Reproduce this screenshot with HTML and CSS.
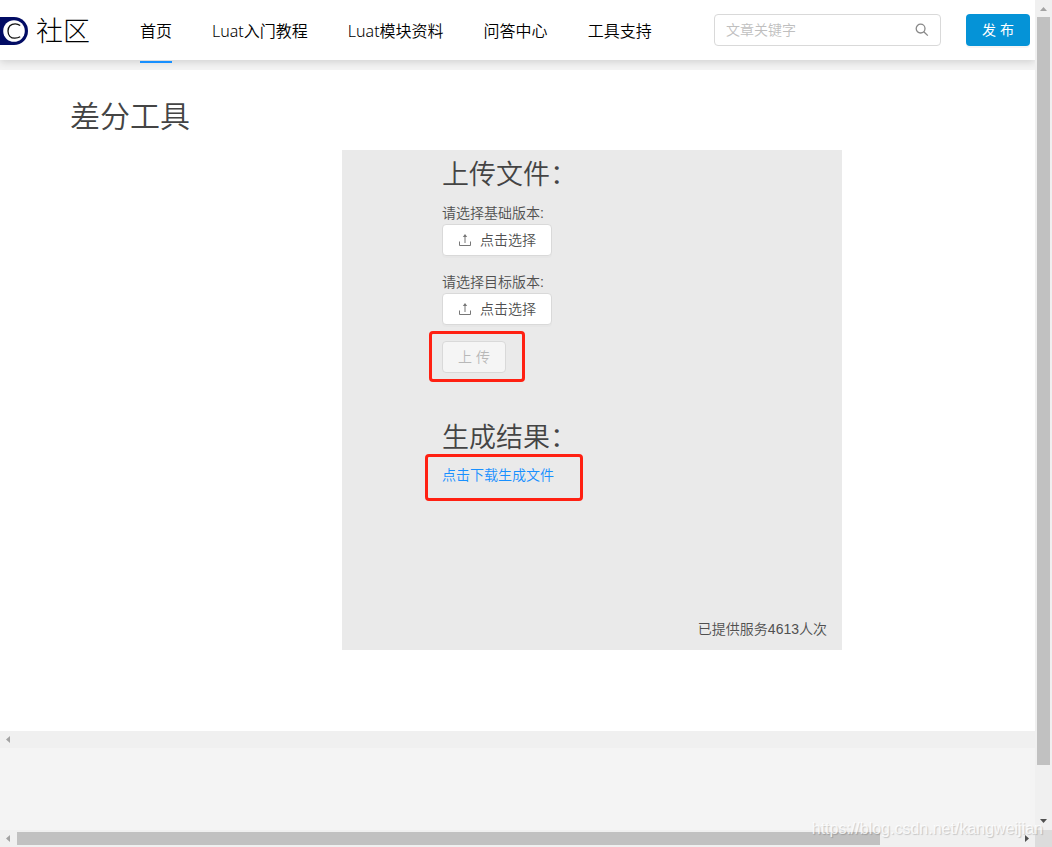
FILE: index.html
```html
<!DOCTYPE html>
<html lang="zh-CN">
<head>
<meta charset="utf-8">
<meta name="viewport" content="width=device-width, initial-scale=1">
<title>差分工具</title>
<link rel="stylesheet" href="styles.css">
</head>
<body>
<div class="frame">
  <div class="viewport">
    <header class="header">
      <a class="logo" href="#">
        <svg class="logo-mark" viewBox="0 0 28 28" aria-hidden="true">
          <path d="M0 0H14A14 14 0 0 1 14 28H0Z" fill="#020c64"/>
          <circle cx="14" cy="14" r="10.8" fill="#fff"/>
          <path d="M20.2 8.6C18.8 7.5 17.1 6.8 15.2 6.8C10.8 6.8 8 9.8 8 14C8 18.3 10.6 21.2 14.8 21.2C17 21.2 18.7 20.7 20.2 19.8" fill="none" stroke="#111" stroke-width="1.3"/>
        </svg>
        <span class="logo-text">社区</span>
      </a>
      <nav class="nav">
        <a class="nav-link active" href="#">首页</a>
        <a class="nav-link" href="#">Luat入门教程</a>
        <a class="nav-link" href="#">Luat模块资料</a>
        <a class="nav-link" href="#">问答中心</a>
        <a class="nav-link" href="#">工具支持</a>
      </nav>
      <div class="search">
        <input class="search-input" type="text" placeholder="文章关键字" aria-label="文章关键字">
        <svg class="search-icon" viewBox="0 0 14 14" aria-hidden="true"><circle cx="5.6" cy="5.6" r="4.4"/><path d="M8.8 8.8L12.8 12.6"/></svg>
      </div>
      <button class="publish" type="button">发 布</button>
    </header>
    <main class="content">
      <h1 class="title">差分工具</h1>
      <div class="stage">
        <section class="card">
          <div class="form">
            <h2 class="subtitle">上传文件：</h2>
            <div class="field">
              <label class="label" for="base">请选择基础版本:</label>
              <button class="btn" id="base" type="button"><svg class="upload-icon" viewBox="0 0 12 12" aria-hidden="true"><path d="M.5 7.5V11.5H11.5V7.5M6 9V1.5"/><path class="tip" d="M6 0L8.2 3H3.8Z"/></svg>点击选择</button>
            </div>
            <div class="field">
              <label class="label" for="target">请选择目标版本:</label>
              <button class="btn" id="target" type="button"><svg class="upload-icon" viewBox="0 0 12 12" aria-hidden="true"><path d="M.5 7.5V11.5H11.5V7.5M6 9V1.5"/><path class="tip" d="M6 0L8.2 3H3.8Z"/></svg>点击选择</button>
            </div>
            <div class="submit"><button class="btn" type="button" disabled>上 传</button></div>
            <h2 class="subtitle">生成结果：</h2>
            <div class="result"><a class="download" href="#">点击下载生成文件</a></div>
          </div>
          <p class="count">已提供服务4613人次</p>
        </section>
      </div>
    </main>
    <div class="inner-bar"><svg class="arrow" viewBox="0 0 17 17"><path d="M6 8.5L10 5V12Z"/></svg></div>
  </div>
  <div class="vbar">
    <svg class="arrow" viewBox="0 0 17 17"><path d="M5 11H12L8.5 7Z"/></svg>
    <div class="vtrack"><div class="vthumb"></div></div>
    <svg class="arrow dark" viewBox="0 0 17 17"><path d="M5 6H12L8.5 10Z"/></svg>
  </div>
  <div class="hbar">
    <svg class="arrow" viewBox="0 0 17 17"><path d="M6 8.5L10 5V12Z"/></svg>
    <div class="htrack"><div class="hthumb"></div></div>
    <svg class="arrow dark" viewBox="0 0 17 17"><path d="M11 8.5L7 5V12Z"/></svg>
  </div>
  <div class="corner"></div>
  <div class="watermark">https://blog.csdn.net/kangweijian</div>
</div>
</body>
</html>
```
FILE: styles.css
```css
* { box-sizing: border-box; }
body {
  margin: 0;
  background: #f4f4f4;
  color: #505050;
  font-family: "Liberation Sans", "Noto Sans CJK SC", sans-serif;
  font-size: 14px;
  font-weight: 350;
  line-height: 22px;
}
a { color: inherit; text-decoration: none; }
button, input { font: inherit; color: inherit; }

.frame {
  position: relative;
  display: grid;
  grid-template-columns: minmax(0, 1fr) 17px;
  grid-template-rows: minmax(0, 1fr) 17px;
  height: 100vh;
}
.viewport { overflow: hidden; }

.header {
  position: relative;
  display: flex;
  align-items: center;
  height: 60px;
  padding-right: 5px;
  background: #fff;
  box-shadow: 0 2px 8px rgba(0, 0, 0, 0.15);
}
.logo { display: flex; align-items: center; gap: 8px; padding-top: 2px; color: #000; }
.logo-mark { width: 28px; height: 28px; }
.logo-text { padding-top: 2px; font-size: 27px; font-weight: 300; line-height: 40px; }
.nav {
  display: flex;
  gap: 40px;
  margin-left: 50px;
  padding-top: 2px;
  color: #000;
  font-family: "Noto Sans", "Noto Sans CJK SC", sans-serif;
  font-size: 16px;
  line-height: 62px;
  white-space: nowrap;
}
.nav-link { position: relative; }
.active::after {
  content: "";
  position: absolute;
  bottom: -1px;
  left: 0;
  right: 0;
  height: 2px;
  background: #1890ff;
}
.search {
  display: flex;
  align-items: center;
  width: 227px;
  height: 32px;
  margin-left: auto;
  padding: 0 11px;
  border: 1px solid #d9d9d9;
  border-radius: 4px;
  background: #fff;
}
.search-input { flex: 1; min-width: 0; padding: 0; border: 0; outline: 0; background: none; }
.search-input::placeholder { color: #bfbfbf; opacity: 1; }
.search-icon { width: 14px; height: 14px; fill: none; stroke: #888; stroke-width: 1.3; }
.publish {
  width: 64px;
  height: 32px;
  margin-left: 25px;
  padding: 0;
  border: 0;
  border-radius: 4px;
  background: #0593d7;
  box-shadow: 0 2px 0 rgba(0, 0, 0, 0.04);
  color: #fff;
  font-weight: 400;
}

.content { margin-top: 10px; padding: 27px 0 81px; background: #fff; }
.title { margin: 0 0 13px 70px; color: #444; font-size: 30px; font-weight: 350; line-height: 40px; }
.stage { display: flex; justify-content: center; padding-left: 149px; }
.card {
  display: flex;
  flex-direction: column;
  justify-content: space-between;
  width: 500px;
  min-height: 500px;
  padding: 6px 15px 10px 100px;
  background: #eaeaea;
}
.subtitle { margin: 0; color: #444; font-size: 27px; font-weight: 350; line-height: 38px; }
.field { margin-top: 8px; }
.field + .field { margin-top: 15px; }
.label { display: block; }
.btn {
  display: inline-flex;
  align-items: center;
  gap: 9px;
  height: 32px;
  padding: 0 15px;
  border: 1px solid #d9d9d9;
  border-radius: 4px;
  background: #fff;
  box-shadow: 0 2px 0 rgba(0, 0, 0, 0.015);
  vertical-align: top;
}
.field .btn { padding: 0 15px 0 16px; }
.btn:disabled { background: #f5f5f5; color: #b8b8b8; box-shadow: none; }
.upload-icon { width: 12px; height: 12px; fill: none; stroke: #777; }
.tip { fill: #777; stroke: none; }
.submit, .result { position: relative; }
.submit { width: 64px; height: 32px; margin: 16px 0 46px; }
.result { width: 112px; margin-top: 7px; }
.submit::after, .result::after {
  content: "";
  position: absolute;
  border: 3px solid #ff2012;
  border-radius: 4px;
  pointer-events: none;
}
.submit::after { inset: -10px -19px -9px -13px; }
.result::after { inset: -10px -29px -15px -17px; }
.download { display: block; color: #1890ff; white-space: nowrap; }
.count { margin: 0; text-align: right; }

.inner-bar, .vbar, .hbar { background: #f0f0f0; }
.inner-bar { height: 17px; }
.arrow { display: block; flex: none; width: 17px; height: 17px; fill: #a3a3a3; }
.dark { fill: #505050; }
.vbar, .hbar { display: flex; }
.vbar { flex-direction: column; }
.vtrack, .htrack { flex: 1; }
.vtrack { padding: 0 2px; }
.htrack { padding: 2px 0; }
.vthumb { height: 94%; background: #c1c1c1; }
.hthumb { width: 86.2%; height: 13px; background: #c1c1c1; }
.corner { background: #dcdcdc; }
.watermark {
  position: absolute;
  right: 9px;
  bottom: 7px;
  color: rgba(255, 255, 255, 0.8);
  font-size: 16px;
  font-weight: 400;
  text-shadow: 1px 1px 1px rgba(0, 0, 0, 0.18);
}
```
